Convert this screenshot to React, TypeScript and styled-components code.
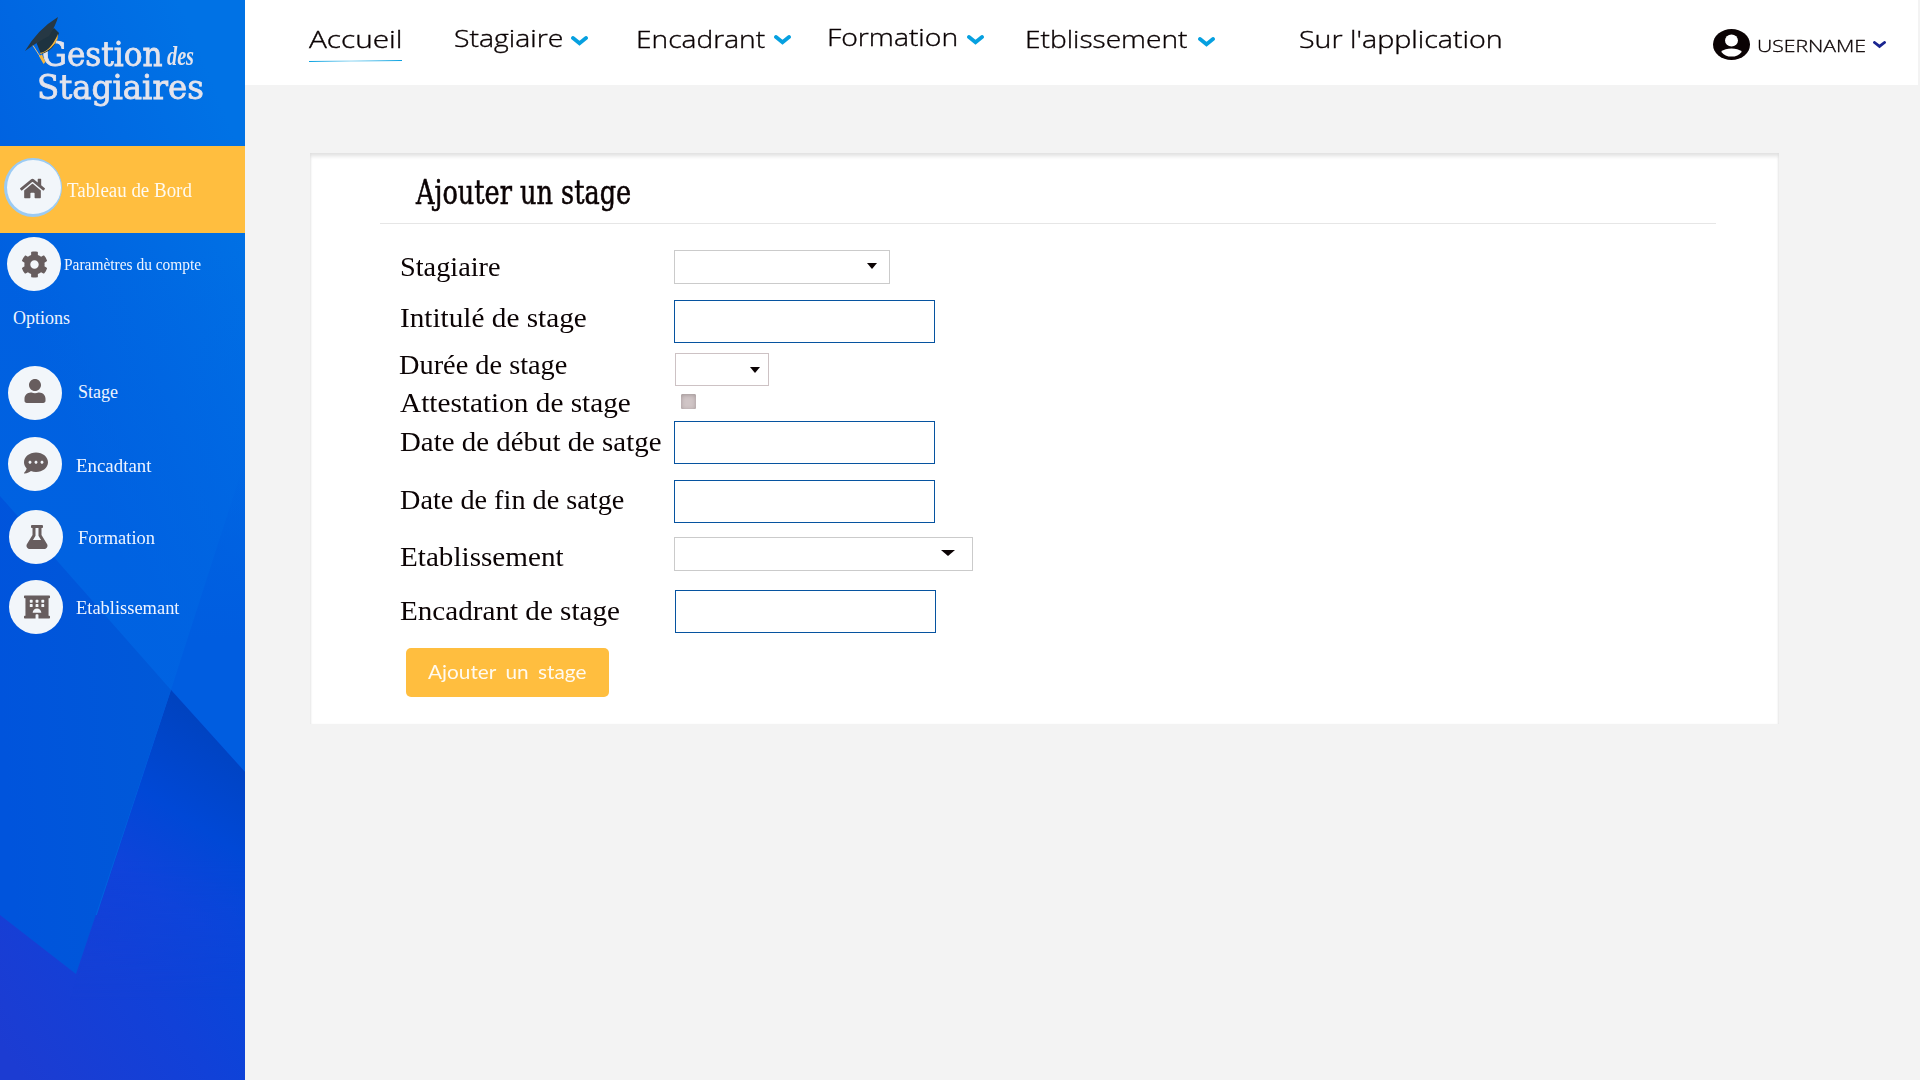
import React, { useLayoutEffect, useRef, useState } from "react";
import styled, { createGlobalStyle } from "styled-components";
import { FaHome, FaCog, FaUser, FaCommentDots, FaFlask, FaHotel } from "react-icons/fa";

const serif = `"Liberation Serif", "Times New Roman", serif`;
const slab = `"DejaVu Serif", "Liberation Serif", serif`;
const sans = `"Open Sans", "Noto Sans", sans-serif`;
const rounded = `Lato, "Open Sans", sans-serif`;

const GlobalStyle = createGlobalStyle`
  * { box-sizing: border-box; }
  body { margin: 0; background: #f3f3f3; font-family: ${sans}; overflow: hidden; }
`;

/* Text condensed or expanded to an exact measure */
const Measure = styled.span<{ $w: number; $drop?: number; $indent?: number }>`
  display: block;
  flex: none;
  width: ${(p) => p.$w}px;
  margin-top: ${(p) => p.$drop ?? 0}px;
  margin-left: ${(p) => p.$indent ?? 0}px;
`;
const Glyphs = styled.span<{ $size: number; $font: string; $color: string; $weight: number; $italic?: boolean; $word: number; $stroke: number }>`
  display: inline-block;
  vertical-align: top;
  white-space: nowrap;
  transform-origin: 0 0;
  line-height: 1;
  font-family: ${(p) => p.$font};
  font-size: ${(p) => p.$size}px;
  font-weight: ${(p) => p.$weight};
  font-style: ${(p) => (p.$italic ? "italic" : "normal")};
  word-spacing: ${(p) => p.$word}px;
  color: ${(p) => p.$color};
  -webkit-text-stroke: ${(p) => p.$stroke}px ${(p) => p.$color};
`;

type FitProps = {
  children: string;
  width: number;
  size: number;
  font?: string;
  color?: string;
  weight?: number;
  italic?: boolean;
  word?: number;
  stroke?: number;
  drop?: number;
  indent?: number;
};

function FitText({ children, width, size, font = serif, color = "#0b0304", weight = 400, italic, word = 0, stroke = 0, drop, indent }: FitProps) {
  const ref = useRef<HTMLSpanElement>(null);
  const [scale, setScale] = useState(1);
  useLayoutEffect(() => {
    if (ref.current && ref.current.offsetWidth) setScale(width / ref.current.offsetWidth);
  }, [width, children, size]);
  return (
    <Measure $w={width} $drop={drop} $indent={indent}>
      <Glyphs ref={ref} $size={size} $font={font} $color={color} $weight={weight} $italic={italic} $word={word} $stroke={stroke}
        style={{ transform: `scaleX(${scale})` }}>
        {children}
      </Glyphs>
    </Measure>
  );
}

const Page = styled.div`
  display: grid;
  grid-template-columns: 245px 1fr;
  width: 1920px;
  height: 1080px;
  background: #f3f3f3;
`;

/* ---------- Sidebar ---------- */
const Sidebar = styled.aside`
  position: relative;
  height: 1080px;
  overflow: hidden;
  background: #0064e0;
`;
const Backdrop = styled.svg`
  position: absolute;
  inset: 0;
`;
const SideContent = styled.div`
  position: relative;
  display: flex;
  flex-direction: column;
`;
const Brand = styled.div`
  position: relative;
  height: 146px;
  padding: 37px 0 0 39px;
`;
const BrandLine = styled.div`
  display: flex;
  align-items: flex-start;
  height: 33px;
`;
const Cap = styled.svg`
  position: absolute;
  left: 24px;
  top: 16px;
`;
const SideItem = styled.div<{ $height: number; $left: number; $top?: number; $active?: boolean }>`
  display: flex;
  align-items: flex-start;
  height: ${(p) => p.$height}px;
  padding: ${(p) => p.$top ?? 0}px 0 0 ${(p) => p.$left}px;
  background: ${(p) => (p.$active ? "#ffbe3f" : "transparent")};
`;
const Disc = styled.span<{ $ring?: boolean }>`
  display: flex;
  flex: none;
  align-items: center;
  justify-content: center;
  width: ${(p) => (p.$ring ? 58 : 54)}px;
  height: ${(p) => (p.$ring ? 59 : 54)}px;
  border-radius: 50%;
  background: #f2f6fa;
  color: #675d5e;
  border-style: solid;
  border-color: #9bcbf4;
  border-width: ${(p) => (p.$ring ? "2px 1px 3px 3px" : "0")};
`;
const IconBox = styled.span<{ $x?: number; $y?: number }>`
  display: flex;
  margin: ${(p) => p.$y ?? 0}px 0 0 ${(p) => p.$x ?? 0}px;
`;

function SidebarBackdrop() {
  return (
    <Backdrop width="245" height="1080" viewBox="0 0 245 1080">
      <defs>
        <linearGradient id="sky" gradientUnits="userSpaceOnUse" x1="0" y1="260" x2="245" y2="160">
          <stop offset="0" stopColor="#0060e0" />
          <stop offset="1" stopColor="#0072e5" />
        </linearGradient>
        <linearGradient id="mid" x1="0" y1="0" x2="0" y2="1">
          <stop offset="0" stopColor="#0064e2" stopOpacity="0" />
          <stop offset="1" stopColor="#0063e2" />
        </linearGradient>
        <linearGradient id="east" gradientUnits="userSpaceOnUse" x1="0" y1="460" x2="0" y2="640">
          <stop offset="0" stopColor="#005de0" stopOpacity="0" />
          <stop offset="1" stopColor="#005de0" />
        </linearGradient>
        <linearGradient id="left" gradientUnits="userSpaceOnUse" x1="0" y1="700" x2="171" y2="690">
          <stop offset="0" stopColor="#0054dc" />
          <stop offset="1" stopColor="#0059d8" />
        </linearGradient>
        <linearGradient id="deep" gradientUnits="userSpaceOnUse" x1="235" y1="740" x2="90" y2="960">
          <stop offset="0" stopColor="#0043c0" />
          <stop offset="0.35" stopColor="#0048d6" />
          <stop offset="0.65" stopColor="#1043da" />
          <stop offset="1" stopColor="#1640d6" />
        </linearGradient>
        <linearGradient id="floor" gradientUnits="userSpaceOnUse" x1="10" y1="1060" x2="245" y2="900">
          <stop offset="0" stopColor="#1c3cd2" />
          <stop offset="0.55" stopColor="#1141d8" />
          <stop offset="1" stopColor="#0448da" />
        </linearGradient>
        <linearGradient id="fade" x1="0" y1="0" x2="0" y2="1">
          <stop offset="0" stopColor="#fff" />
          <stop offset="0.55" stopColor="#fff" />
          <stop offset="1" stopColor="#000" />
        </linearGradient>
        <mask id="deepMask">
          <rect x="0" y="690" width="245" height="310" fill="url(#fade)" />
        </mask>
      </defs>
      <rect width="245" height="780" fill="url(#sky)" />
      <rect y="250" width="245" height="530" fill="url(#mid)" />
      <path d="M245 460 L171 690 L245 775Z" fill="url(#east)" />
      <rect y="915" width="245" height="165" fill="url(#floor)" />
      <path d="M171 690 L245 772 L245 1080 L0 1080 L0 915 L78 972Z" fill="url(#floor)" />
      <path d="M171 690 L245 772 L245 1000 L70 1000Z" fill="url(#deep)" mask="url(#deepMask)" />
      <path d="M0 496 L171 690 L76 974 L0 915Z" fill="url(#left)" />
    </Backdrop>
  );
}

const sideRows = [
  { label: "Stage", icon: <FaUser size={24} />, left: 8, height: 71, gap: 16, drop: 17, width: 40, x: 0, y: -4 },
  { label: "Encadtant", icon: <FaCommentDots size={24} />, left: 8, height: 73, gap: 13.5, drop: 20, width: 75.5, x: 1, y: -2 },
  { label: "Formation", icon: <FaFlask size={24} />, left: 9, height: 70, gap: 15, drop: 19, width: 77, x: 1, y: 0 },
  { label: "Etablissemant", icon: <FaHotel size={26} />, left: 9, height: 70, gap: 12.5, drop: 19, width: 103.5, x: 2, y: 0 },
];

/* ---------- Top bar ---------- */
const Main = styled.main`
  display: flex;
  flex-direction: column;
  min-width: 0;
`;
const TopBar = styled.header`
  display: flex;
  align-items: flex-start;
  height: 85px;
  width: 1673px;
  padding-left: 64px;
  background: #fff;
`;
const NavLink = styled.div<{ $gap: number }>`
  display: flex;
  flex: none;
  align-items: flex-start;
  margin-left: ${(p) => p.$gap}px;
`;
const ActiveLink = styled.div`
  display: flex;
  flex-direction: column;
  flex: none;
`;
const Underline = styled.svg`
  margin-top: 9px;
`;
const ChevronSvg = styled.svg<{ $top: number; $left: number }>`
  flex: none;
  margin: ${(p) => p.$top}px 0 0 ${(p) => p.$left}px;
`;
function Chevron({ top, left, w = 17, h = 10, color = "#06a0e0" }: { top: number; left: number; w?: number; h?: number; color?: string }) {
  return (
    <ChevronSvg $top={top} $left={left} width={w} height={h} viewBox="0 0 17 10" preserveAspectRatio="none">
      <path d="M2 2 L8.5 7.2 L15 2" fill="none" stroke={color} strokeWidth="3.8" strokeLinecap="round" />
    </ChevronSvg>
  );
}
const Avatar = styled.svg`
  flex: none;
  margin: 29px 0 0 209.5px;
`;

const navLinks = [
  { label: "Stagiaire", gap: 50.5, width: 109, drop: 25.7, chevTop: 35.5, chevLeft: 8.5 },
  { label: "Encadrant", gap: 47.5, width: 129, drop: 26.7, chevTop: 35.3, chevLeft: 9.5 },
  { label: "Formation", gap: 35.5, width: 131, drop: 24.7, chevTop: 34.5, chevLeft: 9 },
  { label: "Etblissement", gap: 41.5, width: 163, drop: 26.7, chevTop: 37.3, chevLeft: 10 },
];

/* ---------- Card ---------- */
const Card = styled.section`
  width: 1469px;
  height: 571px;
  margin: 68px 0 0 65px;
  background: #fff;
  box-shadow: inset 0 5px 4px -2px #dfdfdf, inset 2px 0 2px -1px #e9e9e9, inset -2px 0 2px -1px #e9e9e9;
`;
const CardHead = styled.div`
  display: flex;
  height: 71px;
  margin: 0 63px 0 70px;
  padding: 22px 0 0 36px;
  border-bottom: 1px solid #e6e6e6;
`;
const Form = styled.form`
  display: flex;
  flex-direction: column;
  padding: 26px 0 0 89px;
`;
const Row = styled.div<{ $height: number }>`
  display: grid;
  grid-template-columns: 275px auto;
  justify-content: start;
  align-items: start;
  height: ${(p) => p.$height}px;
`;
const Input = styled.input<{ $shift?: number }>`
  width: 261px;
  height: 43px;
  margin: 0 0 0 ${(p) => p.$shift ?? 0}px;
  border: 1px solid #0653a0;
  background: #fff;
  outline: none;
`;
const Select = styled.div<{ $w: number; $h: number; $shift?: number; $tone?: string; $arrowRight: number; $arrowTop: number }>`
  display: flex;
  justify-content: flex-end;
  align-items: flex-start;
  width: ${(p) => p.$w}px;
  height: ${(p) => p.$h}px;
  margin-left: ${(p) => p.$shift ?? 0}px;
  padding: ${(p) => p.$arrowTop}px ${(p) => p.$arrowRight}px 0 0;
  border: 1px solid ${(p) => p.$tone ?? "#cbcbcb"};
  background: #fff;
`;
const Arrow = styled.span<{ $w: number }>`
  width: ${(p) => p.$w}px;
  height: 6px;
  background: #0b0304;
  clip-path: polygon(0 0, 100% 0, 50% 100%);
`;
const Check = styled.span`
  width: 15px;
  height: 15px;
  margin-left: 7px;
  border-radius: 1.5px;
  background: #d0c5c6;
  box-shadow: inset 0 1px 4px #a09596;
`;
const Submit = styled.button`
  display: flex;
  align-items: flex-start;
  width: 203px;
  height: 49px;
  margin: 0 0 0 7px;
  padding: 13px 0 0 22px;
  border: 0;
  border-radius: 5px;
  background: #ffbe3f;
`;

const inputRow = (label: string, width: number, drop: number, height: number, shift = 0) => (
  <Row $height={height}>
    <FitText size={28} width={width} drop={drop} indent={0.5}>{label}</FitText>
    <Input $shift={shift} aria-label={label} />
  </Row>
);

export default function App() {
  return (
    <Page>
      <GlobalStyle />
      <Sidebar>
        <SidebarBackdrop />
        <SideContent>
          <Brand>
            <BrandLine>
              <FitText size={34} width={121} font={slab} color="#e4e4ec" stroke={0.8} indent={3}>Gestion</FitText>
              <FitText size={27} width={27} color="#e4e4ec" weight={700} italic drop={6} indent={4}>des</FitText>
            </BrandLine>
            <BrandLine>
              <FitText size={34} width={167} font={slab} color="#e4e4ec" stroke={0.8} indent={-2}>Stagiaires</FitText>
            </BrandLine>
            <Cap width="38" height="49" viewBox="0 0 38 49">
              <path d="M12.5 27 L17 38 Q26 36 31 28 L35 17 L30 12Z" fill="#1e3340" />
              <path d="M15.5 37 Q26 36 34 18 L33.5 23 Q29 33 17 38Z" fill="#f5b63f" />
              <path d="M1 35 Q14 13 34 1 Q32 9 25 20 Q13 26 1 35Z" fill="#263844" />
              <path d="M9 29.5 L19 45" fill="none" stroke="#e9c27a" strokeWidth="1" />
              <path d="M15 40 L18 38.5 L21.5 46 L19.5 48Z" fill="#f5b63f" />
            </Cap>
          </Brand>
          <SideItem $active $height={87} $left={3.5} $top={12}>
            <Disc $ring><IconBox $x={-2} $y={2}><FaHome size={25} /></IconBox></Disc>
            <FitText size={20} width={125} color="#fffaf0" drop={22} indent={5.5}>Tableau de Bord</FitText>
          </SideItem>
          <SideItem $height={71} $left={7} $top={4}>
            <Disc><FaCog size={27} /></Disc>
            <FitText size={16} width={137} color="#eef4ff" drop={19.5} indent={3}>Paramètres du compte</FitText>
          </SideItem>
          <SideItem $height={62} $left={13}>
            <FitText size={18} width={57} color="#eef4ff" drop={4.5}>Options</FitText>
          </SideItem>
          {sideRows.map((r) => (
            <SideItem key={r.label} $height={r.height} $left={r.left}>
              <Disc><IconBox $x={r.x} $y={r.y}>{r.icon}</IconBox></Disc>
              <FitText size={18} width={r.width} color="#eef4ff" drop={r.drop} indent={r.gap}>{r.label}</FitText>
            </SideItem>
          ))}
        </SideContent>
      </Sidebar>

      <Main>
        <TopBar>
          <ActiveLink>
            <FitText size={24} width={93} font={sans} weight={300} stroke={0.35} drop={26.7}>Accueil</FitText>
            <Underline width="94" height="4" viewBox="0 0 94 4">
              <defs>
                <linearGradient id="rule" x1="0" x2="1" y1="0" y2="0">
                  <stop offset="0" stopColor="#06a0e0" />
                  <stop offset="0.45" stopColor="#8fd6f2" />
                  <stop offset="1" stopColor="#06a0e0" />
                </linearGradient>
              </defs>
              <path d="M0 0.9 L93 0 L93 1 L0 2Z" fill="url(#rule)" />
            </Underline>
          </ActiveLink>
          {navLinks.map((n) => (
            <NavLink key={n.label} $gap={n.gap}>
              <FitText size={24} width={n.width} font={sans} weight={300} stroke={0.35} drop={n.drop}>{n.label}</FitText>
              <Chevron top={n.chevTop} left={n.chevLeft} />
            </NavLink>
          ))}
          <NavLink $gap={84}>
            <FitText size={24} width={204} font={sans} weight={300} stroke={0.35} drop={26.7}>Sur l'application</FitText>
          </NavLink>
          <Avatar width="37" height="31" viewBox="0 0 20 20" preserveAspectRatio="none">
            <circle cx="10" cy="10" r="10" fill="#0b0304" />
            <ellipse cx="10" cy="7.4" rx="3.5" ry="3.9" fill="#fff" />
            <path d="M4.4 14.6 Q6.5 12.5 10 12.5 Q13.5 12.5 15.6 14.6 Q13.5 17.8 10 17.8 Q6.5 17.8 4.4 14.6Z" fill="#fff" />
          </Avatar>
          <FitText size={17.3} width={109} font={sans} weight={300} stroke={0.3} drop={36.6} indent={7}>USERNAME</FitText>
          <Chevron top={41} left={7} w={13} h={7.5} color="#1a2590" />
        </TopBar>

        <Card>
          <CardHead>
            <FitText size={34} width={215} font={slab} stroke={0.6}>Ajouter un stage</FitText>
          </CardHead>
          <Form>
            <Row $height={50}>
              <FitText size={28} width={101} drop={2.5} indent={0.5}>Stagiaire</FitText>
              <Select $w={216} $h={34} $arrowTop={12} $arrowRight={12} aria-label="Stagiaire"><Arrow $w={10} /></Select>
            </Row>
            {inputRow("Intitulé de stage", 187, 3.5, 53)}
            <Row $height={41}>
              <FitText size={28} width={168} drop={-2.5} indent={-0.5}>Durée de stage</FitText>
              <Select $w={94} $h={33} $shift={1} $tone="#cdc2c4" $arrowTop={13} $arrowRight={8} aria-label="Durée de stage"><Arrow $w={10} /></Select>
            </Row>
            <Row $height={27}>
              <FitText size={28} width={231} drop={-5.5} indent={0.5}>Attestation de stage</FitText>
              <Check />
            </Row>
            {inputRow("Date de début de satge", 261, 6.5, 59)}
            {inputRow("Date de fin de satge", 224, 5.5, 57)}
            <Row $height={53}>
              <FitText size={28} width={163.5} drop={5.5} indent={0.5}>Etablissement</FitText>
              <Select $w={299} $h={34} $arrowTop={12} $arrowRight={17} aria-label="Etablissement"><Arrow $w={14} /></Select>
            </Row>
            {inputRow("Encadrant de stage", 219.5, 6.5, 58, 1)}
            <Submit type="button">
              <FitText size={20} width={158} font={rounded} color="#fffaf0" word={4} indent={-3}>Ajouter un stage</FitText>
            </Submit>
          </Form>
        </Card>
      </Main>
    </Page>
  );
}
